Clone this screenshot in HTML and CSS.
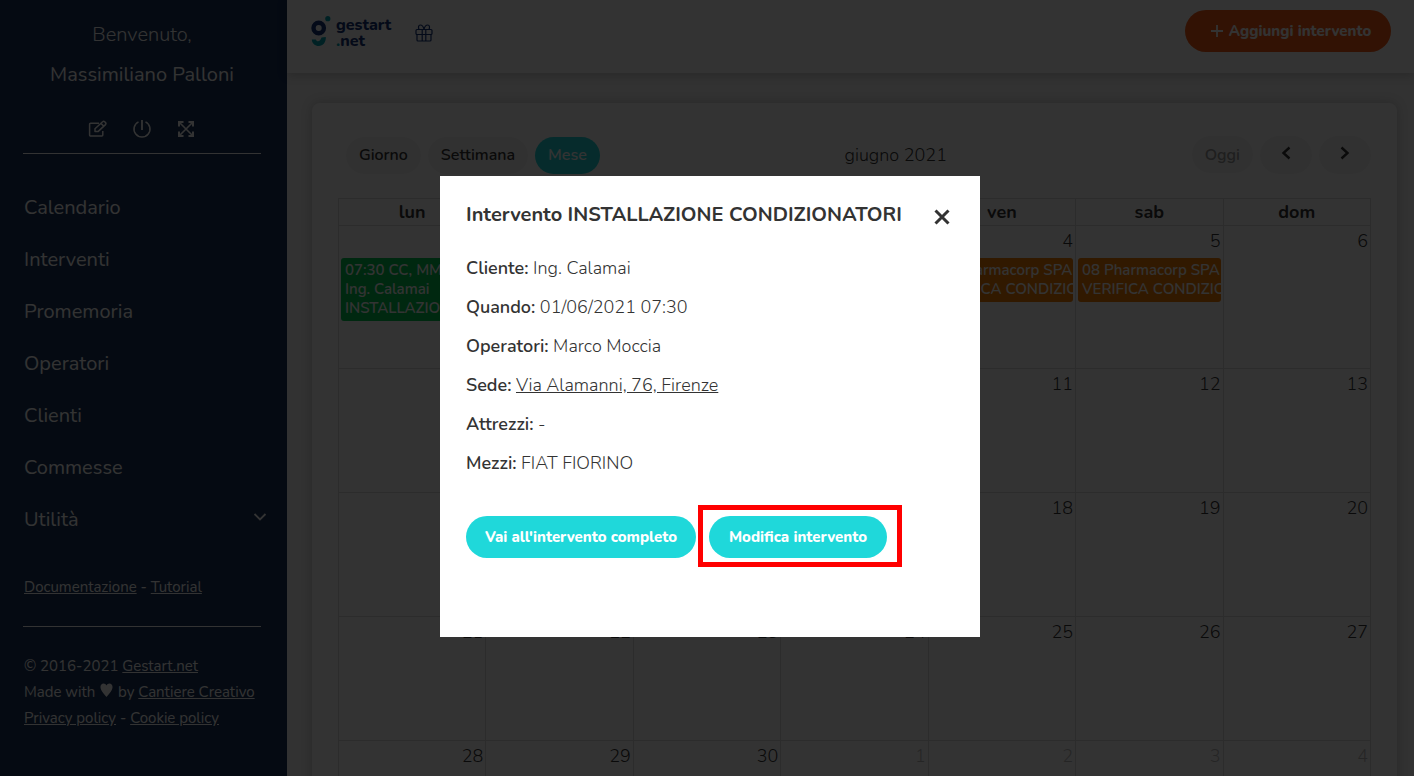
FILE: index.html
```html
<!DOCTYPE html>
<html lang="it">
<head>
    <meta charset="UTF-8">
    <meta name="viewport" content="width=device-width, initial-scale=1.0">
    <title>Gestart.net - Calendario</title>
    <link rel="stylesheet" href="styles.css">
</head>
<body>
    <div class="app">
        <aside class="sidebar">
            <div class="welcome">
                <p>Benvenuto,</p>
                <p class="user">Massimiliano Palloni</p>
            </div>
            <div class="tools">
                <a href="#" aria-label="Profilo">
                    <svg width="20" height="18" viewBox="0 0 20 18" fill="none" stroke="currentColor" stroke-width="1.500" stroke-linejoin="round">
                        <path d="M11 3.200H2.600A1 1 0 0 0 1.600 4.200V15A1 1 0 0 0 2.600 16H13.800A1 1 0 0 0 14.800 15V11"/>
                        <path d="M7 11.600V8.800L14.600 1.800A1.500 1.500 0 0 1 16.700 1.800L17.500 2.600A1.500 1.500 0 0 1 17.500 4.600L10 11.600ZM13 3.400L15.800 6.200"/>
                    </svg>
                </a>
                <a href="#" aria-label="Esci">
                    <svg width="20" height="18" viewBox="0 0 20 18" fill="none" stroke="currentColor" stroke-width="1.500">
                        <path d="M6.500 1.800A8 8 0 1 0 13.500 1.800"/>
                        <path d="M10 0V10" stroke-width="1.800"/>
                    </svg>
                </a>
                <a href="#" aria-label="Schermo intero">
                    <svg width="20" height="18" viewBox="0 0 20 18" fill="none" stroke="currentColor" stroke-width="1.600">
                        <path d="M3 2L17 16M17 2L3 16"/>
                        <path d="M3 6.500V2H7.500M12.500 2H17V6.500M17 11.500V16H12.500M7.500 16H3V11.500" stroke-width="2"/>
                    </svg>
                </a>
            </div>
            <nav class="menu">
                <a href="#">Calendario</a>
                <a href="#">Interventi</a>
                <a href="#">Promemoria</a>
                <a href="#">Operatori</a>
                <a href="#">Clienti</a>
                <a href="#">Commesse</a>
                <a href="#">Utilità
                    <svg width="14" height="14" viewBox="0 0 14 14" fill="none" stroke="currentColor" stroke-width="1.800"><path d="M1.500 2L7 7.500L12.500 2"/></svg>
                </a>
            </nav>
            <p class="docs"><a href="#">Documentazione</a> - <a href="#">Tutorial</a></p>
            <footer class="credits">
                <p>© 2016-2021 <a href="#">Gestart.net</a></p>
                <p>Made with <svg width="13" height="14" viewBox="0 0 14 14" preserveAspectRatio="none" fill="currentColor"><path d="M7 14C4 10.500 .5 7.500 .5 4C.5 2 2 .5 3.800 .5C5.200 .5 6.500 1.200 7 2.600C7.500 1.200 8.800 .5 10.200 .5C12 .5 13.500 2 13.500 4C13.500 7.500 10 10.500 7 14Z"/></svg> by <a href="#">Cantiere Creativo</a></p>
                <p><a href="#">Privacy policy</a> - <a href="#">Cookie policy</a></p>
            </footer>
        </aside>

        <div class="content">
            <header class="topbar">
                <a href="#" class="logo">
                    <svg width="20" height="32" viewBox="0 0 20 32" fill="none">
                        <circle cx="7.700" cy="13" r="5.200" stroke="#14347a" stroke-width="4.400"/>
                        <circle cx="16.800" cy="3.700" r="2.600" fill="#00a5b4"/>
                        <path d="M.8 24.500H4.800C6 27.500 9.500 26.500 10.500 22.500L14.800 22C15.200 27 12 31 7.800 31C4 31 1 28.500 .8 24.500Z" fill="#00a5b4"/>
                    </svg>
                    <span class="logo-text"><span>gestart</span><span><i>.</i>net</span></span>
                </a>
                <a href="#" class="gift" aria-label="Novità">
                    <svg width="18" height="18" viewBox="0 0 18 18" fill="none" stroke="currentColor" stroke-width="1.200">
                        <rect x="1" y="5.500" width="16" height="5" rx="1"/>
                        <path d="M2 10.500V16A1 1 0 0 0 3 17H15A1 1 0 0 0 16 16V10.500M7.200 5.500V17M10.800 5.500V17"/>
                        <path d="M9 5.500C8.500 3 7 1 5.200 1C3.500 1 3 3 4 5.500M9 5.500C9.500 3 11 1 12.800 1C14.500 1 15 3 14 5.500"/>
                    </svg>
                </a>
                <button type="button" class="btn btn-add">
                    <svg width="12" height="12" viewBox="0 0 12 12" stroke="currentColor" stroke-width="1.800"><path d="M6 0V12M0 6H12"/></svg>
                    Aggiungi intervento
                </button>
            </header>

            <main class="card">
                <div class="toolbar">
                    <div class="views">
                        <button type="button">Giorno</button>
                        <button type="button">Settimana</button>
                        <button type="button" class="active">Mese</button>
                    </div>
                    <h2>giugno 2021</h2>
                    <div class="pager">
                        <button type="button" disabled>Oggi</button>
                        <button type="button" class="arrow" aria-label="Precedente">
                            <svg width="10" height="14" viewBox="0 0 10 14" fill="none" stroke="currentColor" stroke-width="2.400"><path d="M8.500 1.500L2.500 7L8.500 12.500"/></svg>
                        </button>
                        <button type="button" class="arrow" aria-label="Successivo">
                            <svg width="10" height="14" viewBox="0 0 10 14" fill="none" stroke="currentColor" stroke-width="2.400"><path d="M1.500 1.500L7.500 7L1.500 12.500"/></svg>
                        </button>
                    </div>
                </div>
                <table class="calendar">
                    <thead>
                        <tr><th>lun</th><th>mar</th><th>mer</th><th>gio</th><th>ven</th><th>sab</th><th>dom</th></tr>
                    </thead>
                    <tbody>
                        <tr class="busy">
                            <td class="other">31<div class="event green">07:30 CC, MM<br>Ing. Calamai<br>INSTALLAZIONE</div></td>
                            <td>1</td>
                            <td>2</td>
                            <td>3</td>
                            <td>4<div class="event orange">08 Pharmacorp SPA<br>VERIFICA CONDIZIONATORI</div></td>
                            <td>5<div class="event orange">08 Pharmacorp SPA<br>VERIFICA CONDIZIONATORI</div></td>
                            <td>6</td>
                        </tr>
                        <tr><td>7</td><td>8</td><td>9</td><td>10</td><td>11</td><td>12</td><td>13</td></tr>
                        <tr><td>14</td><td>15</td><td>16</td><td>17</td><td>18</td><td>19</td><td>20</td></tr>
                        <tr><td>21</td><td>22</td><td>23</td><td>24</td><td>25</td><td>26</td><td>27</td></tr>
                        <tr><td>28</td><td>29</td><td>30</td><td class="other">1</td><td class="other">2</td><td class="other">3</td><td class="other">4</td></tr>
                    </tbody>
                </table>
            </main>
        </div>
    </div>

    <div class="overlay">
        <div class="modal" role="dialog" aria-labelledby="modalTitle">
            <div class="modal-head">
                <h1 id="modalTitle">Intervento INSTALLAZIONE CONDIZIONATORI</h1>
                <button type="button" class="close" aria-label="Chiudi">
                    <svg width="16" height="16" viewBox="0 0 16 16" stroke="currentColor" stroke-width="3"><path d="M1.500 1.500L14.500 14.500M14.500 1.500L1.500 14.500"/></svg>
                </button>
            </div>
            <p><strong>Cliente:</strong> Ing. Calamai</p>
            <p><strong>Quando:</strong> 01/06/2021 07:30</p>
            <p><strong>Operatori:</strong> Marco Moccia</p>
            <p><strong>Sede:</strong> <a href="#">Via Alamanni, 76, Firenze</a></p>
            <p><strong>Attrezzi:</strong> -</p>
            <p><strong>Mezzi:</strong> FIAT FIORINO</p>
            <div class="actions">
                <button type="button" class="btn btn-full">Vai all'intervento completo</button>
                <div class="highlight">
                    <button type="button" class="btn btn-edit">Modifica intervento</button>
                </div>
            </div>
        </div>
    </div>
</body>
</html>
```

FILE: styles.css
```css
* {
    box-sizing: border-box;
}
body {
    margin: 0;
    font-family: Nunito, Lato, sans-serif;
    font-size: 18px;
    font-weight: 300;
    color: #333;
}
p, h1, h2 {
    margin: 0;
}
a {
    color: inherit;
}
strong {
    font-weight: 650;
}
button {
    font-family: inherit;
    border: none;
    cursor: pointer;
}
.app {
    display: flex;
    height: 100vh;
    overflow: hidden;
    background-color: #f7f7f7;
}

/* sidebar */
.sidebar {
    flex: 0 0 287px;
    min-width: 0;
    padding: 15px 26px 0 23px;
    background-color: #19325a;
    color: #fff;
}
.welcome {
    text-align: center;
    font-size: 20px;
    line-height: 40px;
}
.user {
    font-weight: 400;
}
.tools {
    display: flex;
    justify-content: center;
    gap: 24px;
    padding: 25px 0 15px;
    border-bottom: 1px solid #fff;
}
.tools svg {
    display: block;
}
.menu {
    display: flex;
    flex-direction: column;
    margin-top: 27px;
    padding-left: 1px;
}
.menu a {
    display: flex;
    align-items: center;
    justify-content: space-between;
    height: 52px;
    margin-right: -6px;
    font-size: 20px;
    font-weight: 400;
    text-decoration: none;
}
.docs {
    margin-top: 29px;
    padding: 0 1px 26px;
    border-bottom: 1px solid #fff;
    font-size: 15px;
    font-weight: 400;
    line-height: 26px;
}
.credits {
    margin-top: 26px;
    padding-left: 1px;
    font-size: 15px;
    font-weight: 400;
    line-height: 26px;
    white-space: nowrap;
}
.credits svg {
    margin: 0 1px;
}

/* header */
.content {
    flex: 1;
    min-width: 0;
}
.topbar {
    display: flex;
    align-items: flex-start;
    height: 73px;
    padding: 10px 23px 0 24px;
    background-color: #fff;
    box-shadow: 0 2px 10px rgba(0, 0, 0, .2);
}
.logo {
    display: flex;
    gap: 5px;
    padding-top: 5px;
    color: #14347a;
    text-decoration: none;
}
.logo-text {
    display: flex;
    flex-direction: column;
    padding-top: 2px;
    font-size: 16px;
    font-weight: 800;
    line-height: 16px;
}
.logo-text i {
    color: #00a5b4;
    font-style: normal;
}
.gift {
    margin: 14px auto 0 24px;
    color: #14347a;
}
.btn {
    height: 42px;
    border-radius: 21px;
    color: #fff;
    background-color: #1fd8da;
    font-size: 15px;
    font-weight: 800;
    white-space: nowrap;
}
.btn-add {
    display: flex;
    align-items: center;
    justify-content: center;
    gap: 6px;
    width: 206px;
    padding-left: 12px;
    background-color: #f75a14;
}

/* calendar */
.card {
    margin: 30px 17px 0 25px;
    padding: 33px 26px 26px;
    border-radius: 8px;
    background-color: #fff;
    box-shadow: 0 0 12px rgba(0, 0, 0, .2);
}
.toolbar {
    display: flex;
    align-items: center;
    justify-content: space-between;
    height: 38px;
    margin-bottom: 24px;
}
.toolbar h2 {
    font-size: 18px;
    font-weight: 300;
}
.toolbar button {
    height: 37px;
    padding: 0 13px;
    border-radius: 19px;
    background-color: #f5f5f5;
    color: #333;
    font-size: 16px;
    font-weight: 650;
}
.toolbar button.active {
    background-color: #1fd8da;
    color: #fff;
}
.toolbar button:disabled {
    color: #999;
}
.toolbar .arrow {
    width: 52px;
    height: 38px;
}
.views {
    display: flex;
    gap: 7px;
    padding-left: 8px;
}
.pager {
    display: flex;
    justify-content: flex-end;
    gap: 7px;
}
.calendar {
    width: 100%;
    table-layout: fixed;
    border-collapse: collapse;
}
.calendar th,
.calendar td {
    border: 1px solid #ddd;
}
.calendar th {
    height: 27px;
    padding: 0;
    font-weight: 700;
    line-height: 26px;
}
.calendar td {
    height: 124px;
    padding: 3px 2px 0;
    line-height: 24px;
    text-align: right;
    vertical-align: top;
}
.calendar .busy td {
    height: 143px;
}
.calendar .other {
    color: #bbb;
}
.event {
    overflow: hidden;
    margin-top: 5px;
    padding: 3px 4px;
    border-radius: 3px;
    color: #fff;
    font-size: 15px;
    font-weight: 650;
    line-height: 19px;
    text-align: left;
    white-space: nowrap;
}
.green {
    background-color: #00c853;
}
.orange {
    background-color: #f57c00;
}

/* modal */
.overlay {
    position: fixed;
    inset: 0;
    display: flex;
    justify-content: center;
    align-items: flex-start;
    padding: 176px 0 0 6px;
    background-color: rgba(0, 0, 0, .8);
}
.modal {
    width: 540px;
    padding: 21px 26px 79px;
    background-color: #fff;
}
.modal-head {
    display: flex;
    align-items: center;
    justify-content: space-between;
    margin-bottom: 16px;
}
.modal h1 {
    font-size: 20px;
    font-weight: 700;
    line-height: 36px;
}
.close {
    margin-right: 4px;
    padding: 4px 0 0;
    background: none;
    color: #333;
}
.close svg {
    display: block;
}
.modal p {
    line-height: 39px;
}
.actions {
    display: flex;
    gap: 13px;
    margin-top: 33px;
}
.btn-full {
    width: 230px;
}
.btn-edit {
    width: 178px;
}
.highlight {
    position: relative;
}
/* red frame round the edit button */
.highlight::after {
    content: "";
    position: absolute;
    inset: -11px -15px -9px -11px;
    border: 5px solid #f00;
    pointer-events: none;
}
```
